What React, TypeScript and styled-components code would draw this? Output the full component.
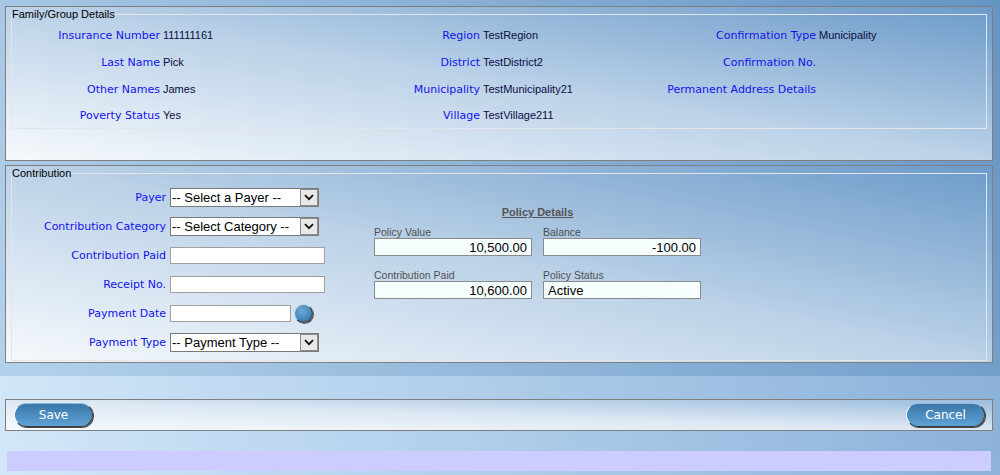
import React from "react";
import styled, { createGlobalStyle } from "styled-components";

const GlobalStyle = createGlobalStyle`
  html, body { margin: 0; padding: 0; height: 100%; }
  body { font-family: "DejaVu Sans", Verdana, sans-serif; font-size: 11px; }
  #root { min-height: 100%; }
`;

const Page = styled.div`
  min-height: 100vh;
  display: flex;
  flex-direction: column;
  background: linear-gradient(80deg, #d2e7f9 0%, #86aed7 100%);
`;

const Upper = styled.div`
  display: flex;
  flex-direction: column;
  gap: 4px;
  padding: 6px 7px 13px 5px;
  background: linear-gradient(62deg, #b4d1eb 0%, #6595c4 100%);
`;

const Panel = styled.div<{ $bottom: number }>`
  border: 1px solid #7f7f7f;
  padding: 1px 5px ${(p) => p.$bottom}px 5px;
  background: linear-gradient(to top right, #f6f9fc 0%, #bcd2e8 50%, #6c9bc9 100%);
`;

const Box = styled.fieldset`
  margin: 0;
  padding: 0;
  min-inline-size: 0;
  border: 1px solid #e2e6ea;
`;

const Legend = styled.legend`
  padding: 0;
  margin: 0;
  font-family: "Liberation Sans", Arial, sans-serif;
  font-size: 11px;
  line-height: 13px;
  color: #000;
`;

const InfoGrid = styled.div`
  display: grid;
  grid-template-columns: 148px 140px 180px 160px 176px 1fr;
  grid-template-rows: 27px 27px 27px 25px;
  padding-top: 1px;
  align-items: center;
`;

const BlueLabel = styled.span`
  justify-self: end;
  text-align: right;
  white-space: nowrap;
  color: #1212ee;
  font-family: "DejaVu Sans", Verdana, sans-serif;
  font-size: 11px;
`;

const InfoValue = styled.span`
  padding-left: 3px;
  white-space: nowrap;
  font-family: "Liberation Sans", Arial, sans-serif;
  font-size: 11px;
  color: #0b0b45;
  position: relative;
  top: -1px;
`;

const ContribBody = styled.div`
  display: flex;
  padding: 3px 0;
`;

const Form = styled.div`
  width: 362px;
  display: grid;
  grid-template-columns: 154px auto;
  column-gap: 4px;
  grid-auto-rows: 29px;
  align-items: center;
  justify-items: start;
`;

const SelectWrap = styled.div`
  position: relative;
  width: 149px;
  height: 19px;
`;

const NativeSelect = styled.select`
  appearance: none;
  -webkit-appearance: none;
  width: 100%;
  height: 100%;
  box-sizing: border-box;
  margin: 0;
  padding: 0 20px 0 1px;
  border: 1px solid #7a7a7a;
  border-radius: 0;
  background: #fff;
  color: #000;
  font-family: "Liberation Sans", Arial, sans-serif;
  font-size: 13px;
`;

const ArrowBox = styled.span`
  position: absolute;
  top: 1px;
  right: 1px;
  bottom: 1px;
  width: 18px;
  box-sizing: border-box;
  border: 1px solid #8c8c8c;
  background: #e8e8e8;
  display: flex;
  align-items: center;
  justify-content: center;
  pointer-events: none;
`;

const TextInput = styled.input<{ $w: number }>`
  width: ${(p) => p.$w}px;
  height: 17px;
  box-sizing: border-box;
  margin: 0;
  padding: 0 2px;
  border: 1px solid #a0a0a0;
  background: #fff;
  font-family: "Liberation Sans", Arial, sans-serif;
  font-size: 13px;
`;

const DateRow = styled.div`
  display: flex;
  align-items: center;
  gap: 3px;
`;

const CalendarButton = styled.button`
  width: 19px;
  height: 19px;
  padding: 0;
  box-sizing: border-box;
  border-radius: 50%;
  border: 1px solid #3a3a3a;
  border-top-color: #c9d4de;
  border-left-color: #c9d4de;
  background: radial-gradient(circle at 40% 35%, #6ea9d8 0%, #4b8bbf 50%, #35709f 85%);
  box-shadow: 1px 1px 0 #5a5a5a;
  cursor: pointer;
`;

const Policy = styled.div`
  display: flex;
  flex-direction: column;
  padding-top: 22px;
`;

const PolicyTitle = styled.div`
  text-align: center;
  font-family: "Liberation Sans", Arial, sans-serif;
  font-size: 11px;
  font-weight: bold;
  line-height: 14px;
  text-decoration: underline;
  color: #555;
  margin-bottom: 7px;
`;

const PolicyGrid = styled.div`
  display: grid;
  grid-template-columns: 158px 158px;
  column-gap: 11px;
  row-gap: 13px;
`;

const Field = styled.div`
  display: flex;
  flex-direction: column;
`;

const GrayLabel = styled.span`
  font-family: "Liberation Sans", Arial, sans-serif;
  font-size: 10.5px;
  line-height: 12px;
  color: #505050;
`;

const PolicyInput = styled.input<{ $align: "left" | "right" }>`
  width: 158px;
  height: 18px;
  box-sizing: border-box;
  margin: 0;
  padding: 0 4px;
  border: 1px solid #8a8a8a;
  background: #f6fdfd;
  color: #000;
  text-align: ${(p) => p.$align};
  font-family: "Liberation Sans", Arial, sans-serif;
  font-size: 13px;
`;

const ActionBar = styled.div`
  margin: 23px 7px 0 5px;
  height: 30px;
  border: 1px solid #7f7f7f;
  padding: 0 7px 0 8px;
  display: flex;
  align-items: center;
  justify-content: space-between;
  background: linear-gradient(to top right, #f7fafd 0%, #dbe7f3 50%, #9dbddd 100%);
`;

const PillButton = styled.button`
  width: 79px;
  height: 24px;
  box-sizing: border-box;
  padding: 0;
  border-radius: 12px;
  border: 1px solid #3b3b3b;
  border-top-color: #8fbbe0;
  border-left-color: #f4f8fb;
  background: linear-gradient(#3b77a8 0%, #4c8cc0 50%, #5ea2d4 100%);
  box-shadow: 1px 1px 0 #4a4a4a;
  color: #fff;
  font-family: "DejaVu Sans", Verdana, sans-serif;
  font-size: 12px;
  cursor: pointer;
`;

const MessageBar = styled.div`
  margin: 20px 9px 0 7px;
  height: 20px;
  background: #ccccff;
`;

const Chevron = () => (
  <svg width="10" height="7" viewBox="0 0 10 7">
    <path d="M1 1.2 L5 5.2 L9 1.2" fill="none" stroke="#111" strokeWidth="1.8" />
  </svg>
);

const Select = ({ placeholder }: { placeholder: string }) => (
  <SelectWrap>
    <NativeSelect defaultValue="">
      <option value="">{placeholder}</option>
    </NativeSelect>
    <ArrowBox>
      <Chevron />
    </ArrowBox>
  </SelectWrap>
);

const info: [string, string, string, string, string, string][] = [
  ["Insurance Number", "111111161", "Region", "TestRegion", "Confirmation Type", "Municipality"],
  ["Last Name", "Pick", "District", "TestDistrict2", "Confirmation No.", ""],
  ["Other Names", "James", "Municipality", "TestMunicipality21", "Permanent Address Details", ""],
  ["Poverty Status", "Yes", "Village", "TestVillage211", "", ""],
];

export default function App() {
  return (
    <>
      <GlobalStyle />
      <Page>
        <Upper>
          <Panel $bottom={31}>
            <Box>
              <Legend>Family/Group Details</Legend>
              <InfoGrid>
                {info.map((row, i) => (
                  <React.Fragment key={i}>
                    <BlueLabel>{row[0]}</BlueLabel>
                    <InfoValue>{row[1]}</InfoValue>
                    <BlueLabel>{row[2]}</BlueLabel>
                    <InfoValue>{row[3]}</InfoValue>
                    <BlueLabel>{row[4]}</BlueLabel>
                    <InfoValue>{row[5]}</InfoValue>
                  </React.Fragment>
                ))}
              </InfoGrid>
            </Box>
          </Panel>
          <Panel $bottom={1}>
            <Box>
              <Legend>Contribution</Legend>
              <ContribBody>
                <Form>
                  <BlueLabel>Payer</BlueLabel>
                  <Select placeholder="-- Select a Payer --" />
                  <BlueLabel>Contribution Category</BlueLabel>
                  <Select placeholder="-- Select Category --" />
                  <BlueLabel>Contribution Paid</BlueLabel>
                  <TextInput $w={155} />
                  <BlueLabel>Receipt No.</BlueLabel>
                  <TextInput $w={155} />
                  <BlueLabel>Payment Date</BlueLabel>
                  <DateRow>
                    <TextInput $w={121} />
                    <CalendarButton aria-label="Pick date" />
                  </DateRow>
                  <BlueLabel>Payment Type</BlueLabel>
                  <Select placeholder="-- Payment Type --" />
                </Form>
                <Policy>
                  <PolicyTitle>Policy Details</PolicyTitle>
                  <PolicyGrid>
                    <Field>
                      <GrayLabel>Policy Value</GrayLabel>
                      <PolicyInput $align="right" readOnly value="10,500.00" />
                    </Field>
                    <Field>
                      <GrayLabel>Balance</GrayLabel>
                      <PolicyInput $align="right" readOnly value="-100.00" />
                    </Field>
                    <Field>
                      <GrayLabel>Contribution Paid</GrayLabel>
                      <PolicyInput $align="right" readOnly value="10,600.00" />
                    </Field>
                    <Field>
                      <GrayLabel>Policy Status</GrayLabel>
                      <PolicyInput $align="left" readOnly value="Active" />
                    </Field>
                  </PolicyGrid>
                </Policy>
              </ContribBody>
            </Box>
          </Panel>
        </Upper>
        <ActionBar>
          <PillButton>Save</PillButton>
          <PillButton>Cancel</PillButton>
        </ActionBar>
        <MessageBar />
      </Page>
    </>
  );
}
